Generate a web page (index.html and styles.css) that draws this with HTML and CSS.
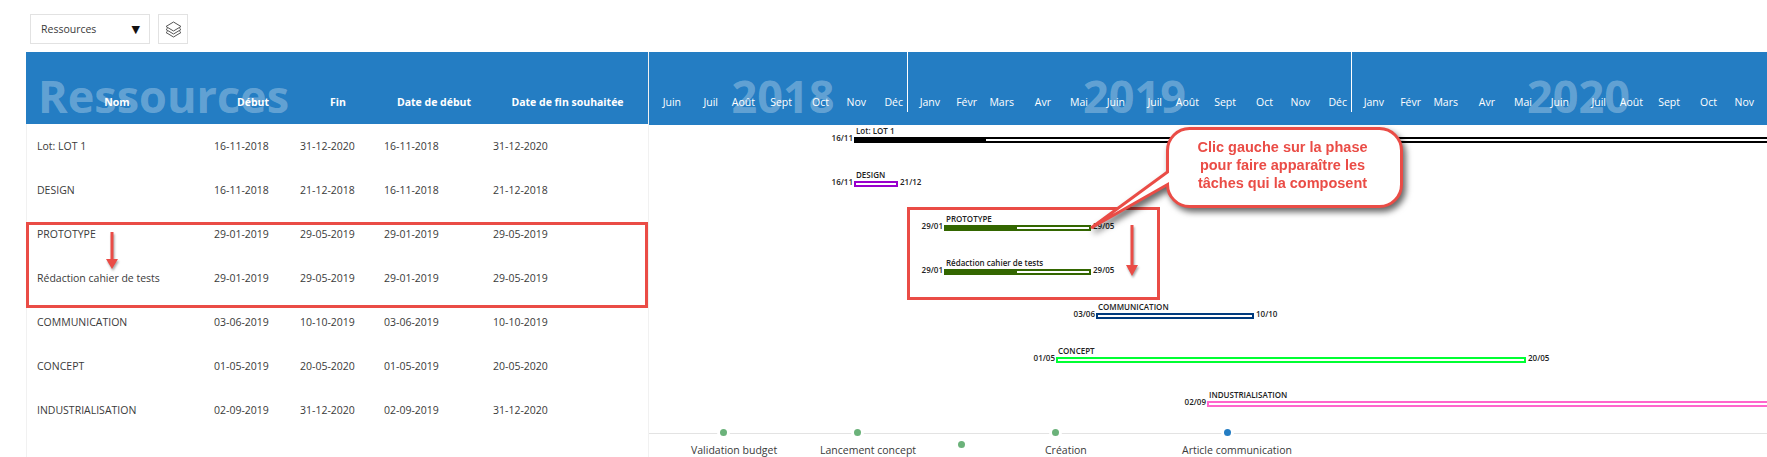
FILE: index.html
```html
<!DOCTYPE html>
<html lang="fr">
<head>
  <meta charset="UTF-8">
  <title>Ressources</title>
  <link rel="stylesheet" href="styles.css">
</head>
<body>
  <div class="toolbar">
    <div class="select">Ressources<span class="select-arrow">▼</span></div>
    <button class="layers-btn">
      <svg width="17" height="17" viewBox="0 0 17 17" fill="none" stroke="#555" stroke-width="1">
        <path d="M8.5 1 16 5.5 8.5 10 1 5.5Z"/>
        <path d="M2.5 7.5 1 8.5 8.5 13 16 8.5 14.5 7.5"/>
        <path d="M2.5 10.5 1 11.5 8.5 16 16 11.5 14.5 10.5"/>
      </svg>
    </button>
  </div>

  <main class="planning">
    <section class="resources">
      <div class="res-head">
        <div class="big-title">Ressources</div>
        <div class="res-row res-labels">
          <span>Nom</span><span>Début</span><span>Fin</span><span>Date de début</span><span>Date de fin souhaitée</span>
        </div>
      </div>
      <div class="res-row res-item"><span>Lot: LOT 1</span><span>16-11-2018</span><span>31-12-2020</span><span>16-11-2018</span><span>31-12-2020</span></div>
      <div class="res-row res-item"><span>DESIGN</span><span>16-11-2018</span><span>21-12-2018</span><span>16-11-2018</span><span>21-12-2018</span></div>
      <div class="res-row res-item"><span>PROTOTYPE</span><span>29-01-2019</span><span>29-05-2019</span><span>29-01-2019</span><span>29-05-2019</span></div>
      <div class="res-row res-item"><span>Rédaction cahier de tests</span><span>29-01-2019</span><span>29-05-2019</span><span>29-01-2019</span><span>29-05-2019</span></div>
      <div class="res-row res-item"><span>COMMUNICATION</span><span>03-06-2019</span><span>10-10-2019</span><span>03-06-2019</span><span>10-10-2019</span></div>
      <div class="res-row res-item"><span>CONCEPT</span><span>01-05-2019</span><span>20-05-2020</span><span>01-05-2019</span><span>20-05-2020</span></div>
      <div class="res-row res-item"><span>INDUSTRIALISATION</span><span>02-09-2019</span><span>31-12-2020</span><span>02-09-2019</span><span>31-12-2020</span></div>

      <div class="red-box red-box-list"></div>
      <svg class="red-arrow arrow-list" width="16" height="38" viewBox="0 0 16 38"><path d="M6.5 0h3v27H14L8 37 2 27h4.500z"/></svg>
    </section>

    <section class="gantt">
      <div class="timeline-head">
        <div class="year year-short">
          <div class="year-title">2018</div>
          <span>Juin</span><span>Juil</span><span>Août</span><span>Sept</span><span>Oct</span><span>Nov</span><span>Déc</span>
        </div>
        <div class="year">
          <div class="year-title">2019</div>
          <span>Janv</span><span>Févr</span><span>Mars</span><span>Avr</span><span>Mai</span><span>Juin</span><span>Juil</span><span>Août</span><span>Sept</span><span>Oct</span><span>Nov</span><span>Déc</span>
        </div>
        <div class="year">
          <div class="year-title">2020</div>
          <span>Janv</span><span>Févr</span><span>Mars</span><span>Avr</span><span>Mai</span><span>Juin</span><span>Juil</span><span>Août</span><span>Sept</span><span>Oct</span><span>Nov</span>
        </div>
      </div>

      <div class="g-row">
        <div class="task black" style="left:205px;width:930px">
          <b class="task-name">Lot: LOT 1</b><i class="date-start">16/11</i>
          <div class="progress" style="width:132px"></div>
        </div>
      </div>
      <div class="g-row">
        <div class="task purple" style="left:205px;width:44px">
          <b class="task-name">DESIGN</b><i class="date-start">16/11</i><i class="date-end">21/12</i>
        </div>
      </div>
      <div class="g-row">
        <div class="task olive" style="left:295px;width:147px">
          <b class="task-name">PROTOTYPE</b><i class="date-start">29/01</i><i class="date-end">29/05</i>
          <div class="progress" style="width:73px"></div>
        </div>
      </div>
      <div class="g-row">
        <div class="task olive" style="left:295px;width:147px">
          <b class="task-name">Rédaction cahier de tests</b><i class="date-start">29/01</i><i class="date-end">29/05</i>
          <div class="progress" style="width:73px"></div>
        </div>
      </div>
      <div class="g-row">
        <div class="task navy" style="left:447px;width:158px">
          <b class="task-name">COMMUNICATION</b><i class="date-start">03/06</i><i class="date-end">10/10</i>
        </div>
      </div>
      <div class="g-row">
        <div class="task green" style="left:407px;width:470px">
          <b class="task-name">CONCEPT</b><i class="date-start">01/05</i><i class="date-end">20/05</i>
        </div>
      </div>
      <div class="g-row">
        <div class="task pink" style="left:558px;width:570px">
          <b class="task-name">INDUSTRIALISATION</b><i class="date-start">02/09</i>
        </div>
      </div>

      <div class="milestones">
        <div class="milestone" style="left:75px"><i class="dot"></i><span style="left:-33px">Validation budget</span></div>
        <div class="milestone" style="left:209px"><i class="dot"></i><span style="left:-38px">Lancement concept</span></div>
        <div class="milestone low" style="left:313px"><i class="dot"></i></div>
        <div class="milestone" style="left:407px"><i class="dot"></i><span style="left:-11px">Création</span></div>
        <div class="milestone" style="left:579px"><i class="dot blue"></i><span style="left:-46px">Article communication</span></div>
      </div>

      <div class="red-box red-box-gantt"></div>
      <svg class="red-arrow arrow-gantt" width="16" height="52" viewBox="0 0 16 52"><path d="M6.500 0h3v40H14L8 51 2 40h4.500z"/></svg>

      <div class="callout">
        <svg width="330" height="115" viewBox="0 0 330 115">
          <path d="M104.500 6.500H294.500A22 22 0 0 1 316.500 28.500V62.500A22 22 0 0 1 294.500 84.500H104.500A22 22 0 0 1 82.500 62.500L6 106 82.500 50V28.500A22 22 0 0 1 104.500 6.500Z"/>
        </svg>
        <p>Clic gauche sur la phase<br>pour faire apparaître les<br>tâches qui la composent</p>
      </div>
    </section>
  </main>
</body>
</html>
```

FILE: styles.css
```css
html, body {
  margin: 0;
  height: 457px;
  overflow: hidden;
}
body {
  background: white;
  font-family: 'Open Sans', sans-serif;
  color: #3a3a3a;
}

/* top toolbar */
.toolbar {
  display: flex;
  gap: 8px;
  height: 52px;
  padding: 14px 0 0 30px;
  box-sizing: border-box;
}
.select {
  display: flex;
  align-items: center;
  justify-content: space-between;
  width: 120px;
  height: 30px;
  padding: 0 9px 0 10px;
  box-sizing: border-box;
  border: 1px solid #e2e2e2;
  font-size: 10.5px;
}
.select-arrow {
  font-family: 'DejaVu Sans', sans-serif;
  font-size: 11px;
  color: #111;
}
.layers-btn {
  display: flex;
  align-items: center;
  justify-content: center;
  width: 30px;
  height: 30px;
  padding: 0;
  background: white;
  border: 1px solid #e2e2e2;
}

.planning {
  display: flex;
}

/* left table */
.resources {
  position: relative;
  flex: none;
  width: 622px;
  height: 405px;
  margin-left: 26px;
  box-shadow: inset 1px 0 #f1f1f1;
}
.res-head {
  position: relative;
  height: 72px;
  background: #247dc3;
}
.big-title {
  position: absolute;
  left: 12px;
  top: 19px;
  font-size: 45px;
  font-weight: 700;
  line-height: 50px;
  color: rgba(255, 255, 255, 0.3);
}
.res-row {
  display: grid;
  grid-template-columns: 182px 90px 80px 112px 155px;
  align-items: center;
}
.res-labels {
  position: absolute;
  left: 0;
  top: 40px;
  height: 20px;
  font-size: 10.5px;
  font-weight: 700;
  color: white;
  text-align: center;
}
.res-item {
  height: 44px;
  font-size: 10.5px;
}
.res-item span:nth-child(1) { padding-left: 11px; }
.res-item span:nth-child(2) { padding-left: 6px; }
.res-item span:nth-child(3) { padding-left: 2px; }
.res-item span:nth-child(4) { padding-left: 6px; }
.res-item span:nth-child(5) { padding-left: 3px; }

/* annotations */
.red-box {
  position: absolute;
  box-sizing: border-box;
  border: 3px solid #ea4c46;
}
.red-box-list {
  left: 0;
  top: 170px;
  width: 622px;
  height: 86px;
}
.red-box-gantt {
  left: 258px;
  top: 155px;
  width: 253px;
  height: 93px;
}
.red-arrow {
  position: absolute;
  fill: #ea4c46;
  filter: drop-shadow(1px 2px 1px rgba(0, 0, 0, 0.35));
}
.arrow-list {
  left: 78px;
  top: 180px;
}
.arrow-gantt {
  left: 475px;
  top: 173px;
}
.callout {
  position: absolute;
  left: 436px;
  top: 70px;
  width: 330px;
  height: 115px;
  filter: drop-shadow(3px 4px 3px rgba(0, 0, 0, 0.6));
}
.callout svg {
  display: block;
  fill: white;
  stroke: #ea4c46;
  stroke-width: 3;
}
.callout p {
  position: absolute;
  left: 80px;
  top: 16px;
  width: 235px;
  margin: 0;
  font-family: 'Liberation Sans', sans-serif;
  font-size: 14.5px;
  font-weight: 700;
  line-height: 18px;
  color: #ea4c46;
  text-align: center;
}

/* gantt */
.gantt {
  position: relative;
  flex: 1;
  min-width: 0;
  margin-left: 1px;
  height: 405px;
  box-shadow: -1px 0 #f1f1f1;
}
.timeline-head {
  display: flex;
  height: 73px;
  background: #247dc3;
  overflow: hidden;
}
.year {
  position: relative;
  flex: none;
  display: flex;
  align-items: flex-end;
  width: 444px;
  height: 60px;
  box-sizing: border-box;
  border-right: 1px solid white;
}
.year-short {
  width: 259px;
}
.year span {
  flex: none;
  width: 37px;
  padding-right: 5px;
  box-sizing: border-box;
  font-size: 10.5px;
  line-height: 20px;
  color: white;
  text-align: right;
}
.year-title {
  position: absolute;
  left: 10px;
  right: 0;
  top: 19px;
  font-size: 45px;
  font-weight: 700;
  line-height: 50px;
  color: rgba(255, 255, 255, 0.3);
  text-align: center;
}
.g-row {
  position: relative;
  height: 44px;
}
.task {
  position: absolute;
  top: 12px;
  height: 6px;
  box-sizing: border-box;
  border: 2px solid;
  background: white;
}
.task b, .task i {
  position: absolute;
  font-size: 8px;
  font-style: normal;
  font-weight: 600;
  line-height: 10px;
  color: #222;
  white-space: nowrap;
}
.task-name {
  left: 0;
  bottom: 5px;
}
.date-start {
  right: calc(100% + 3px);
  top: -6px;
}
.date-end {
  left: calc(100% + 4px);
  top: -6px;
}
.progress {
  position: absolute;
  left: -2px;
  top: -2px;
  height: 6px;
  background: currentColor;
}
.black { color: black; }
.purple { color: #9900cc; }
.olive { color: #336600; }
.navy { color: #003a7d; }
.green { color: #00ff33; }
.pink { color: #ff66cc; }

.milestones {
  position: relative;
  height: 24px;
  border-top: 1px solid #e3e3e3;
}
.milestone {
  position: absolute;
  top: -1px;
}
.milestone.low {
  top: 11px;
}
.dot {
  position: absolute;
  left: -4px;
  top: -4px;
  width: 7px;
  height: 7px;
  border-radius: 50%;
  background: #6bb27a;
  box-shadow: 0 0 0 3px white;
}
.dot.blue {
  background: #247dc3;
}
.milestone span {
  position: absolute;
  top: 9px;
  font-size: 10.5px;
  line-height: 16px;
  white-space: nowrap;
}
```
